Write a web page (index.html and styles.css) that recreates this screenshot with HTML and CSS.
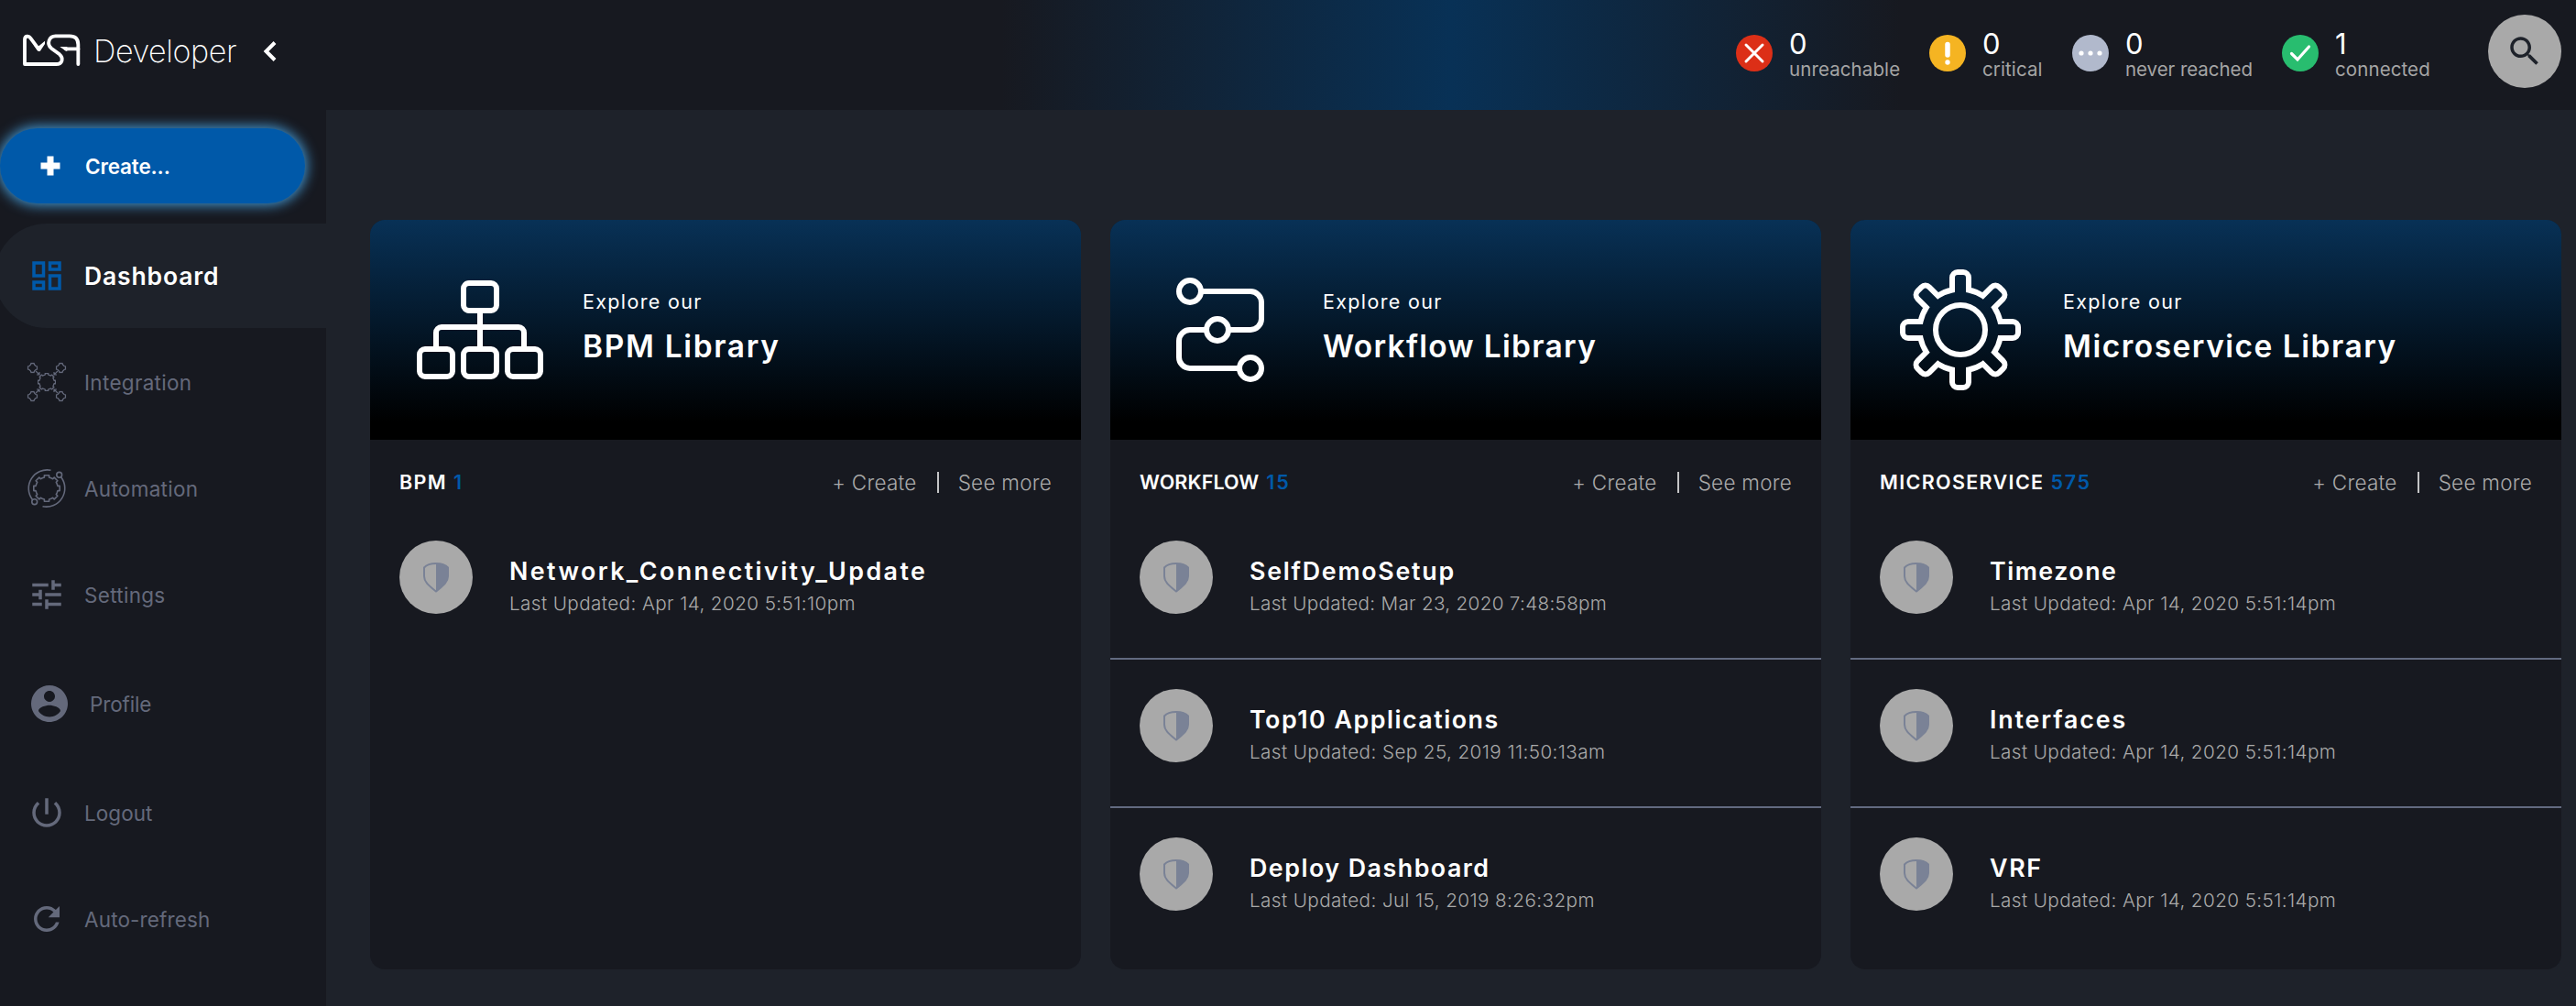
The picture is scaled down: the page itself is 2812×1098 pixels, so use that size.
FILE: index.html
```html
<!DOCTYPE html>
<html lang="en">
<head>
<meta charset="utf-8">
<title>MSA Developer</title>
<link rel="stylesheet" href="styles.css">
</head>
<body>
<svg width="0" height="0" class="defs">
  <symbol id="shield" viewBox="0 0 32 36"><path fill="none" stroke="currentColor" stroke-width="2" d="M16 3C11 3 6 4 3 7.500V17C3 24 10 28.500 16 33.500 22 28.500 29 24 29 17V7.500C26 4 21 3 16 3Z"/><path fill="currentColor" d="M16 3c5 0 10 1 13 4.500V17c0 7-7 11.500-13 16.500z"/></symbol>
  <symbol id="gear" viewBox="-15 -15 30 30"><path fill="none" stroke="currentColor" stroke-linejoin="round" vector-effect="non-scaling-stroke" d="M-2.600-12V-14.200H2.600V-12L4.800-11.200 6.650-10.320 8.200-11.880 11.880-8.200 10.320-6.650 11.200-4.800 12-2.600H14.200V2.600H12L11.200 4.800 10.320 6.650 11.880 8.200 8.200 11.880 6.650 10.320 4.800 11.200 2.600 12V14.200H-2.600V12L-4.800 11.200-6.650 10.320-8.200 11.880-11.880 8.200-10.320 6.650-11.200 4.800-12 2.600H-14.200V-2.600H-12L-11.200-4.800-10.320-6.650-11.880-8.200-8.200-11.880-6.650-10.320-4.800-11.200Z"/></symbol>
  <symbol id="node" viewBox="-6 -6 12 12"><path fill="none" stroke="currentColor" stroke-width="1.300" d="M-1.500-5H1.500L2-3.500 3.500-2 5-1.500V1.500L3.500 2 2 3.500 1.500 5H-1.500L-2 3.500-3.500 2-5 1.500V-1.500L-3.500-2-2-3.500Z"/></symbol>
</svg>

<header class="topbar">
  <div class="brand">
    <svg class="brand-logo" viewBox="0 0 225 150"><g fill="none" stroke="#fff" stroke-width="11.500" stroke-linecap="round" stroke-linejoin="round"><path d="M66 70 40 35C34 26 21 27 21 40V120H124C145 120 149 100 135 88L108 68C92 54 100 28 122 28H168C188 28 196 38 196 56V120"/><path d="M156 70H196"/></g><path fill="#fff" d="M52 60 68 60 87 44V54L71 78 64 77ZM136 63H160V77H156Z"/></svg>
    <span class="brand-name">Developer</span>
    <svg class="brand-chevron" viewBox="0 0 24 28"><path d="M18 4.500 8.500 14l9.500 9.500" fill="none" stroke="#fff" stroke-width="4"/></svg>
  </div>
  <div class="stats">
    <div class="stat stat-unreachable">
      <svg viewBox="0 0 40 40"><circle cx="20" cy="20" r="20" fill="#dc2f17"/><path d="M11 11l18 18M29 11L11 29" stroke="#fff" stroke-width="3" stroke-linecap="round"/></svg>
      <div><b>0</b><span>unreachable</span></div>
    </div>
    <div class="stat stat-critical">
      <svg viewBox="0 0 40 40"><circle cx="20" cy="20" r="20" fill="#f5b422"/><path d="M20 10.500V22" stroke="#fff" stroke-width="5.500" stroke-linecap="round"/><circle cx="20" cy="30" r="2.700" fill="#fff"/></svg>
      <div><b>0</b><span>critical</span></div>
    </div>
    <div class="stat stat-never">
      <svg viewBox="0 0 40 40"><circle cx="20" cy="20" r="20" fill="#b1b9cc"/><g fill="#fff"><circle cx="10" cy="20" r="2.600"/><circle cx="20" cy="20" r="2.600"/><circle cx="30" cy="20" r="2.600"/></g></svg>
      <div><b>0</b><span>never reached</span></div>
    </div>
    <div class="stat stat-connected">
      <svg viewBox="0 0 40 40"><circle cx="20" cy="20" r="20" fill="#28bd6f"/><path d="M10.500 20.500l6.500 6.500L29.500 13" fill="none" stroke="#fff" stroke-width="3.200" stroke-linecap="round"/></svg>
      <div><b>1</b><span>connected</span></div>
    </div>
  </div>
  <button class="search" aria-label="Search">
    <svg viewBox="0 0 24 24" width="42" height="42"><path fill="#1e222a" d="M15.500 14h-.79l-.28-.27C15.410 12.590 16 11.110 16 9.500 16 5.910 13.090 3 9.500 3S3 5.910 3 9.500 5.910 16 9.500 16c1.610 0 3.090-.59 4.230-1.570l.27.28v.79l5 4.990L20.490 19l-4.990-5zm-6 0C7.010 14 5 11.990 5 9.500S7.010 5 9.500 5 14 7.010 14 9.500 11.990 14 9.500 14z"/></svg>
  </button>
</header>

<div class="layout">
  <nav class="sidebar">
    <a class="create"><svg viewBox="0 0 42 42"><path d="M21 14v14M14 21h14" stroke="#fff" stroke-width="7" stroke-linecap="square" stroke-linejoin="round"/></svg>Create...</a>
    <a class="nav-item active"><svg viewBox="0 0 24 24"><path fill="currentColor" d="M19 5v2h-4V5h4M9 5v6H5V5h4m10 8v6h-4v-6h4M9 17v2H5v-2h4M21 3h-8v6h8V3zM11 3H3v10h8V3zm10 8h-8v10h8V11zm-10 4H3v6h8v-6z"/></svg><span>Dashboard</span></a>
    <a class="nav-item"><svg viewBox="0 0 42 42"><use href="#gear" x="11" y="11" width="20" height="20" stroke-width="1.300"/><use href="#node" x="-.5" y="-.5" width="12" height="12"/><use href="#node" x="30.500" y="-.5" width="12" height="12"/><use href="#node" x="-.5" y="30.500" width="12" height="12"/><use href="#node" x="30.500" y="30.500" width="12" height="12"/><path fill="none" stroke="currentColor" stroke-width="1.200" d="M9 9l3.500 3.500M13 10v3h-3M33 9l-3.500 3.500M29 10v3h3M9 33l3.500-3.500M13 32v-3h-3M33 33l-3.500-3.500M29 32v-3h3"/></svg><span>Integration</span></a>
    <a class="nav-item"><svg viewBox="0 0 42 42"><use href="#gear" x="6" y="6" width="30" height="30" stroke-width="1.600"/><g fill="none" stroke="currentColor" stroke-width="1.600"><circle cx="7.700" cy="35.700" r="2.900"/><circle cx="34.700" cy="6.300" r="2.900"/><path d="M5.500 33.500A20.200 20.200 0 0 1 25.500 1.300M36.500 8.500A20.200 20.200 0 0 1 16.500 40.700"/></g></svg><span>Automation</span></a>
    <a class="nav-item"><svg viewBox="0 0 24 24"><path fill="currentColor" d="M3 17v2h6v-2H3zM3 5v2h10V5H3zm10 16v-2h8v-2h-8v-2h-2v6h2zM7 9v2H3v2h4v2h2V9H7zm14 4v-2H11v2h10zm-6-4h2V7h4V5h-4V3h-2v6z"/></svg><span>Settings</span></a>
    <a class="nav-item profile"><svg viewBox="0 0 24 24"><path fill="currentColor" d="M12 2C6.480 2 2 6.480 2 12s4.480 10 10 10 10-4.480 10-10S17.520 2 12 2zm0 3c1.660 0 3 1.340 3 3s-1.340 3-3 3-3-1.340-3-3 1.340-3 3-3zm0 14.200c-2.500 0-4.710-1.280-6-3.220.03-1.990 4-3.080 6-3.080 1.990 0 5.970 1.090 6 3.080-1.290 1.940-3.500 3.220-6 3.220z"/></svg><span>Profile</span></a>
    <a class="nav-item logout"><svg viewBox="0 0 24 24"><path fill="currentColor" d="M13 3h-2v10h2V3zm4.830 2.170l-1.420 1.420C17.990 7.860 19 9.810 19 12c0 3.870-3.130 7-7 7s-7-3.130-7-7c0-2.190 1.010-4.140 2.580-5.420L6.170 5.170C4.230 6.820 3 9.260 3 12c0 4.970 4.030 9 9 9s9-4.030 9-9c0-2.740-1.230-5.180-3.170-6.830z"/></svg><span>Logout</span></a>
    <a class="nav-item refresh"><svg viewBox="0 0 24 24"><path fill="currentColor" d="M17.650 6.350C16.200 4.900 14.210 4 12 4c-4.420 0-7.990 3.580-7.990 8s3.570 8 7.990 8c3.730 0 6.840-2.550 7.730-6h-2.080c-.82 2.330-3.040 4-5.650 4-3.310 0-6-2.690-6-6s2.690-6 6-6c1.660 0 3.140.69 4.220 1.780L13 11h7V4l-2.350 2.350z"/></svg><span>Auto-refresh</span></a>
  </nav>

  <main class="cards">
    <section class="card">
      <div class="hero">
        <svg viewBox="0 0 24 24" fill="none" stroke="#fff"><rect x="9" y="3.500" width="6" height="5" rx="1"/><rect x="1" y="15.500" width="6" height="5" rx="1"/><rect x="9" y="15.500" width="6" height="5" rx="1"/><rect x="17" y="15.500" width="6" height="5" rx="1"/><path d="M12 8.500v7M4 15.500V12.500a1 1 0 0 1 1-1H19a1 1 0 0 1 1 1v3"/></svg>
        <div><p>Explore our</p><h2 class="ls-16">BPM Library</h2></div>
      </div>
      <div class="card-head"><h3>BPM</h3><em>1</em><div class="actions"><a>+ Create</a><i></i><a>See more</a></div></div>
      <ul>
        <li><span class="badge"><svg><use href="#shield"/></svg></span><div><h4 class="ls-24">Network_Connectivity_Update</h4><p class="sub-a">Last Updated: Apr 14, 2020 5:51:10pm</p></div></li>
      </ul>
    </section>

    <section class="card">
      <div class="hero">
        <svg viewBox="0 0 24 24" fill="none" stroke="#fff"><circle cx="6.500" cy="5" r="2"/><circle cx="11.500" cy="12" r="2"/><circle cx="17.500" cy="19" r="2"/><path d="M8.500 5h9a2 2 0 0 1 2 2v3a2 2 0 0 1-2 2h-4M9.500 12h-3a2 2 0 0 0-2 2v3a2 2 0 0 0 2 2h9"/></svg>
        <div><p>Explore our</p><h2 class="ls-13">Workflow Library</h2></div>
      </div>
      <div class="card-head"><h3 class="head-wide">WORKFLOW</h3><em>15</em><div class="actions"><a>+ Create</a><i></i><a>See more</a></div></div>
      <ul>
        <li><span class="badge"><svg><use href="#shield"/></svg></span><div><h4 class="ls-18">SelfDemoSetup</h4><p class="sub-b">Last Updated: Mar 23, 2020 7:48:58pm</p></div></li>
        <li><span class="badge"><svg><use href="#shield"/></svg></span><div><h4 class="ls-15">Top10 Applications</h4><p class="sub-a">Last Updated: Sep 25, 2019 11:50:13am</p></div></li>
        <li><span class="badge"><svg><use href="#shield"/></svg></span><div><h4 class="ls-15">Deploy Dashboard</h4><p class="sub-a">Last Updated: Jul 15, 2019 8:26:32pm</p></div></li>
      </ul>
    </section>

    <section class="card">
      <div class="hero">
        <svg viewBox="-12 -12 24 24" fill="none" stroke="#fff"><circle r="4.500"/><path d="M-1.500-7.250V-9.500A1 1 0 0 1-.5-10.500H.5A1 1 0 0 1 1.500-9.500V-7.250A7.400 7.400 0 0 1 4.070-6.190L5.660-7.780A1 1 0 0 1 7.070-7.780L7.780-7.070A1 1 0 0 1 7.780-5.660L6.190-4.070A7.400 7.400 0 0 1 7.250-1.500H9.500A1 1 0 0 1 10.500-.5V.5A1 1 0 0 1 9.500 1.500H7.250A7.400 7.400 0 0 1 6.190 4.070L7.780 5.660A1 1 0 0 1 7.780 7.070L7.070 7.780A1 1 0 0 1 5.660 7.780L4.070 6.190A7.400 7.400 0 0 1 1.500 7.250V9.500A1 1 0 0 1 .5 10.500H-.5A1 1 0 0 1-1.500 9.500V7.250A7.400 7.400 0 0 1-4.070 6.190L-5.660 7.780A1 1 0 0 1-7.070 7.780L-7.780 7.070A1 1 0 0 1-7.780 5.660L-6.190 4.070A7.400 7.400 0 0 1-7.250 1.500H-9.500A1 1 0 0 1-10.500 .5V-.5A1 1 0 0 1-9.500-1.500H-7.250A7.400 7.400 0 0 1-6.190-4.070L-7.780-5.660A1 1 0 0 1-7.780-7.070L-7.070-7.780A1 1 0 0 1-5.660-7.780L-4.070-6.190A7.400 7.400 0 0 1-1.500-7.250Z"/></svg>
        <div><p>Explore our</p><h2 class="ls-15">Microservice Library</h2></div>
      </div>
      <div class="card-head"><h3>MICROSERVICE</h3><em>575</em><div class="actions"><a>+ Create</a><i></i><a>See more</a></div></div>
      <ul>
        <li><span class="badge"><svg><use href="#shield"/></svg></span><div><h4 class="ls-15">Timezone</h4><p class="sub-a">Last Updated: Apr 14, 2020 5:51:14pm</p></div></li>
        <li><span class="badge"><svg><use href="#shield"/></svg></span><div><h4 class="ls-19">Interfaces</h4><p class="sub-a">Last Updated: Apr 14, 2020 5:51:14pm</p></div></li>
        <li><span class="badge"><svg><use href="#shield"/></svg></span><div><h4 class="ls-16">VRF</h4><p class="sub-a">Last Updated: Apr 14, 2020 5:51:14pm</p></div></li>
      </ul>
    </section>
  </main>
</div>
</body>
</html>
```
FILE: styles.css
```css
* { box-sizing: border-box; margin: 0; padding: 0; }
html, body { height: 100%; }
body {
  display: flex;
  flex-direction: column;
  background: #1e222a;
  color: #fff;
  font-family: "Inter", "Roboto", sans-serif;
  overflow: hidden;
}
.defs { position: absolute; }
svg { flex: none; overflow: visible; }

/* Top bar */
.topbar {
  display: flex;
  height: 120px;
  flex: none;
  padding-right: 16px;
  background: linear-gradient(90deg, #171920 1093px, #083156 1584px, #171920 2075px);
}
.brand { display: flex; align-items: center; height: 112px; padding-left: 20px; }
.brand-logo { width: 75px; height: 50px; margin-top: -2px; }
.brand-name { width: 180px; margin-left: 7px; font-size: 34px; font-weight: 200; letter-spacing: -.4px; line-height: 40px; }
.brand-chevron { width: 24px; height: 28px; margin: 0; }
.stats { display: grid; grid-template-columns: 211px 156px 229px 225px; margin-left: auto; padding-top: 32px; }
.stat { display: flex; gap: 18px; white-space: nowrap; }
.stat svg { width: 40px; height: 40px; margin-top: 6px; }
.stat b { display: block; font-size: 31px; font-weight: 400; line-height: 32px; }
.stat span { display: block; font-size: 20.5px; line-height: 23px; color: #a5a5a5; letter-spacing: .1px; }
.stat-never span { letter-spacing: -.05px; }
.search {
  display: flex;
  align-items: center;
  justify-content: center;
  width: 80px;
  height: 80px;
  margin-top: 16px;
  border: 0;
  border-radius: 50%;
  background: #a9a9a9;
}

/* Sidebar */
.layout { display: flex; flex: 1; }
.sidebar { width: 356px; background: #171920; }
.create {
  display: flex;
  align-items: center;
  gap: 17px;
  width: 333px;
  height: 82px;
  margin: 20px 0 22px;
  padding-left: 34px;
  border-radius: 41px;
  background: #0059a9;
  box-shadow: 0 0 14px 2px #4499d4;
  font-size: 22.5px;
  font-weight: 600;
  letter-spacing: -.15px;
}
.create svg { width: 42px; height: 42px; }
.nav-item {
  display: flex;
  align-items: center;
  gap: 20px;
  height: 116px;
  padding-left: 30px;
  color: #64697b;
  font-size: 22.5px;
  letter-spacing: .3px;
}
.nav-item svg { width: 42px; height: 42px; }
.nav-item.active {
  height: 114px;
  margin: 0 0 1px -6px;
  padding-left: 36px;
  border-radius: 57px 0 0 57px;
  background: #1e222a;
  color: #0059a9;
}
.active span { color: #fff; font-size: 26.5px; font-weight: 600; letter-spacing: .85px; }
.nav-item.profile { height: 122px; letter-spacing: -.15px; }
.profile svg { width: 48px; height: 48px; }
.nav-item.logout { letter-spacing: .05px; }
.nav-item.refresh { letter-spacing: .15px; }

/* Library cards */
.cards { display: grid; grid-template-columns: repeat(3, 776px); gap: 32px; flex: 1; padding: 120px 16px 40px 48px; }
.card { border-radius: 16px; background: #171920; overflow: hidden; }
.hero {
  display: flex;
  align-items: center;
  gap: 40px;
  height: 240px;
  padding-left: 48px;
  background: linear-gradient(#083156, #000 92%);
}
.hero svg { width: 144px; height: 144px; }
.hero div { padding-bottom: 5px; }
.hero p { font-size: 21.5px; line-height: 40px; letter-spacing: 1.35px; }
.hero h2 { font-size: 33.5px; font-weight: 600; line-height: 58px; }
.card-head { display: flex; align-items: center; height: 78px; padding: 14px 32px 0; }
.card-head h3, .card-head em { font-size: 21.5px; font-weight: 600; font-style: normal; letter-spacing: 1.35px; }
.card-head .head-wide { letter-spacing: .1px; margin-right: 1px; }
.card-head em { margin-left: 7px; color: #0059a9; letter-spacing: 1.7px; }
.actions { display: flex; align-items: center; margin-left: auto; padding-top: 1px; font-size: 22.5px; font-weight: 300; letter-spacing: .25px; color: #a9a9a9; }
.actions i { width: 2px; height: 23px; margin: 0 21px 0 22px; background: #c4c4c6; }
ul { list-style: none; }
li { display: flex; gap: 40px; height: 162px; padding: 32px 32px 0; }
li:not(:last-child) { border-bottom: 2px solid #626a80; }
.badge {
  display: flex;
  align-items: center;
  justify-content: center;
  width: 80px;
  height: 80px;
  border-radius: 50%;
  background: #a9a9a9;
  color: #7a8296;
}
.badge svg { width: 32px; height: 36px; }
li div { padding-top: 15px; white-space: nowrap; }
li h4 { font-size: 26.800px; font-weight: 600; line-height: 36px; }
li p { font-size: 20.700px; font-weight: 300; line-height: 35px; color: #a9a9a9; }

/* Tracking steps for card titles and item names */
.ls-13 { letter-spacing: 1.300px; }
.ls-15 { letter-spacing: 1.500px; }
.ls-16 { letter-spacing: 1.650px; }
.ls-18 { letter-spacing: 1.750px; }
.ls-19 { letter-spacing: 1.850px; }
.ls-24 { letter-spacing: 2.430px; }
.sub-a { letter-spacing: .4px; }
.sub-b { letter-spacing: .3px; }
```
